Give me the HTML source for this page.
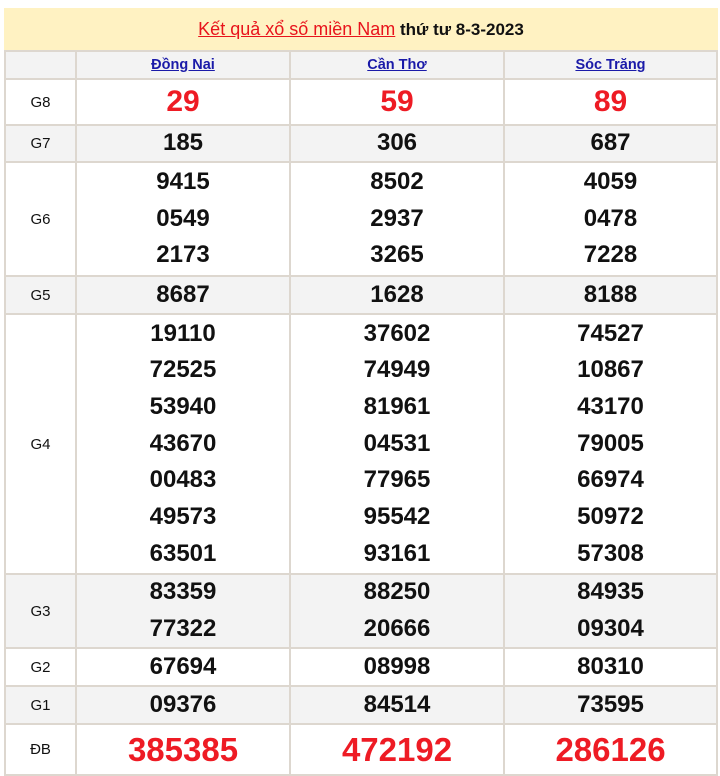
<!DOCTYPE html>
<html><head><meta charset="utf-8"><style>
body{margin:0;width:720px;height:776px;background:#fff;position:relative;overflow:hidden;font-family:"Liberation Sans",Arial,sans-serif}
.t{position:absolute;left:4px;top:8px;width:714px;height:42px;background:#fff2c2;text-align:center;font-size:17px;font-weight:bold;line-height:42px;color:#111}
.t a{color:#e8141c;text-decoration:underline;font-weight:normal;font-size:18px}
.g{position:absolute;left:4px;top:50px;width:714px;height:726px;background:#ddd7cf}
.c{position:absolute;display:flex;align-items:center;justify-content:center;flex-direction:column;text-align:center}
.w{background:#fff}.s{background:#f3f3f3}
.l{font-size:15px;color:#111}
.n{font-size:24px;font-weight:bold;color:#111;line-height:36.7px}
.r{color:#ee1b24}
.h{font-size:14.5px;font-weight:bold;color:#1a1aa8;text-decoration:underline}
</style></head><body>
<div class="t"><a>Kết quả xổ số miền Nam</a> thứ tư 8-3-2023</div>
<div class="g" id="g"></div>
<script>
var g=document.getElementById('g');
var xs=[[2,71],[73,285],[287,499],[501,712]];
var rows=[[2,26,'s'],[30,44,'w'],[76,35,'s'],[113,112,'w'],[227,36,'s'],[265,258,'w'],[525,72,'s'],[599,36,'w'],[637,36,'s'],[675,49,'w']];
var data=[
['',['<span class="h">Đồng Nai</span>'],['<span class="h">Cần Thơ</span>'],['<span class="h">Sóc Trăng</span>']],
['G8',['29'],['59'],['89'],'r8'],
['G7',['185'],['306'],['687']],
['G6',['9415','0549','2173'],['8502','2937','3265'],['4059','0478','7228']],
['G5',['8687'],['1628'],['8188']],
['G4',['19110','72525','53940','43670','00483','49573','63501'],['37602','74949','81961','04531','77965','95542','93161'],['74527','10867','43170','79005','66974','50972','57308']],
['G3',['83359','77322'],['88250','20666'],['84935','09304']],
['G2',['67694'],['08998'],['80310']],
['G1',['09376'],['84514'],['73595']],
['ĐB',['385385'],['472192'],['286126'],'rdb']];
var h='';
rows.forEach(function(r,i){
 var d=data[i];
 for(var j=0;j<4;j++){
  var st='left:'+xs[j][0]+'px;width:'+(xs[j][1]-xs[j][0])+'px;top:'+r[0]+'px;height:'+r[1]+'px';
  var cls=r[2];
  var inner='';
  if(j==0){inner='<span class="l">'+d[0]+'</span>';}
  else if(i==0){inner=d[j][0];}
  else{
   d[j].forEach(function(v){
    var sty='';
    if(d[4]=='r8')sty=' r" style="font-size:30px;line-height:40px';
    if(d[4]=='rdb')sty=' r" style="font-size:33px;line-height:40px';
    inner+='<div class="n'+sty+'">'+v+'</div>';
   });
  }
  h+='<div class="c '+cls+'" style="'+st+'">'+inner+'</div>';
 }
});
g.innerHTML=h;
</script>
</body></html>
